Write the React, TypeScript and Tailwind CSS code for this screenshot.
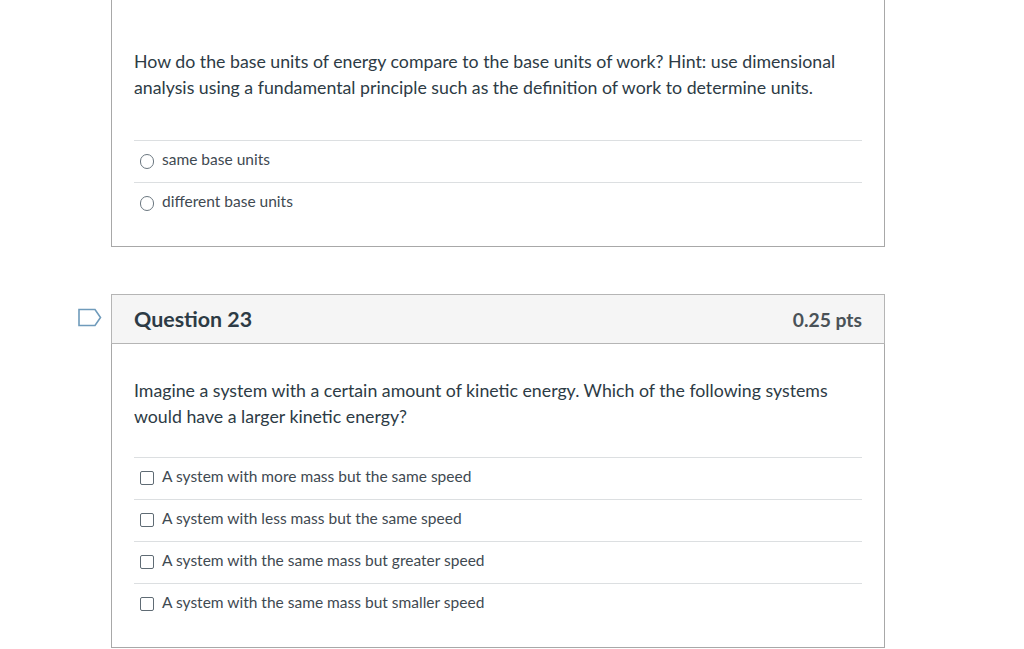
const font = "font-['Lato','Noto_Sans',sans-serif]";

function Radio() {
  return <span className="w-[14.5px] h-[15px] rounded-full border border-[#6b7780] bg-white shrink-0" />;
}

function Check() {
  return <span className="w-[14px] h-[14px] rounded-[2px] border border-[#5f6b74] bg-white shrink-0" />;
}

function Answer({ label, kind }: { label: string; kind: 'radio' | 'check' }) {
  return (
    <div className={`h-[42px] border-t border-[#dcdfe1] flex items-center gap-[8px] pb-[5px] ${kind === 'radio' ? 'pl-[5.5px]' : 'pl-[6px]'}`}>
      <span className="flex translate-y-[2px]">{kind === 'radio' ? <Radio /> : <Check />}</span>
      <span className="text-[15.52px] leading-[20px] text-[#3f4a52]">{label}</span>
    </div>
  );
}

function FlagIcon() {
  return (
    <svg width="24" height="20" viewBox="0 0 24 20" className="shrink-0">
      <path d="M1 1.5H17L22.5 9.5L17 17.5H1Z" fill="#fff" stroke="#6f9bbb" strokeWidth="1.6" />
    </svg>
  );
}

export default function App() {
  return (
    <div className={`w-[1024px] h-[649px] overflow-hidden bg-white ${font}`}>
      <div className="ml-[111px] w-[774px]">
        {/* Previous question, top is scrolled off */}
        <div className="h-[247px] border-x border-b border-[#a8a8a8] px-[22px] pt-[47.5px]">
          <p className="text-[17.74px] leading-[26px] text-[#2d3b45]">
            How do the base units of energy compare to the base units of work? Hint: use dimensional analysis using a fundamental principle such as the definition of work to determine units.
          </p>
          <div className="mt-[40.5px]">
            <Answer kind="radio" label="same base units" />
            <Answer kind="radio" label="different base units" />
          </div>
        </div>

        {/* Question 23 */}
        <div className="mt-[47px] relative">
          <span className="absolute left-[-33.5px] top-[14px] flex">
            <FlagIcon />
          </span>
          <div className="h-[50px] border border-[#b5b5b5] bg-[#f5f5f5] px-[22px] flex items-center justify-between">
            <h2 className="text-[21.4px] font-bold text-[#2d3b45]">Question 23</h2>
            <span className="text-[19.3px] font-bold text-[#4a5257] pt-[2px]">0.25 pts</span>
          </div>
          <div className="h-[304px] border-x border-b border-[#a8a8a8] px-[22px] pt-[32.5px]">
            <p className="text-[17.74px] leading-[26.5px] text-[#2d3b45]">
              Imagine a system with a certain amount of kinetic energy. Which of the following systems would have a larger kinetic energy?
            </p>
            <div className="mt-[27.5px]">
              <Answer kind="check" label="A system with more mass but the same speed" />
              <Answer kind="check" label="A system with less mass but the same speed" />
              <Answer kind="check" label="A system with the same mass but greater speed" />
              <Answer kind="check" label="A system with the same mass but smaller speed" />
            </div>
          </div>
        </div>
      </div>
    </div>
  );
}
